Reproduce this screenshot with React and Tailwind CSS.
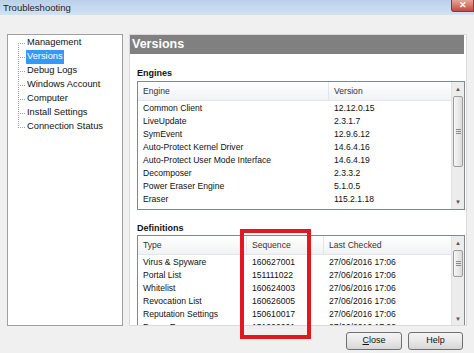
const engines = [
  ['Common Client', '12.12.0.15'],
  ['LiveUpdate', '2.3.1.7'],
  ['SymEvent', '12.9.6.12'],
  ['Auto-Protect Kernel Driver', '14.6.4.16'],
  ['Auto-Protect User Mode Interface', '14.6.4.19'],
  ['Decomposer', '2.3.3.2'],
  ['Power Eraser Engine', '5.1.0.5'],
  ['Eraser', '115.2.1.18'],
]

const definitions = [
  ['Virus & Spyware', '160627001', '27/06/2016 17:06'],
  ['Portal List', '151111022', '27/06/2016 17:06'],
  ['Whitelist', '160624003', '27/06/2016 17:06'],
  ['Revocation List', '160626005', '27/06/2016 17:06'],
  ['Reputation Settings', '150610017', '27/06/2016 17:06'],
  ['Power Eraser', '151020001', '27/06/2016 17:06'],
]

const treeItems = ['Management', 'Versions', 'Debug Logs', 'Windows Account', 'Computer', 'Install Settings', 'Connection Status']

function TreeLines() {
  return (
    <svg width="18" height="98" className="shrink-0">
      <line x1="10.5" y1="7" x2="10.5" y2="91" stroke="#a0a0a0" strokeDasharray="1 1" />
      {treeItems.map((_, i) => (
        <line key={i} x1="10" y1={7.5 + i * 14} x2="18" y2={7.5 + i * 14} stroke="#a0a0a0" strokeDasharray="1 1" />
      ))}
    </svg>
  )
}

function Scrollbar({ thumbTop, thumbHeight }) {
  return (
    <div className="w-[13px] h-full bg-[#ececec] border-l border-[#e2e2e2] flex flex-col">
      <div className="h-[14px] flex items-center justify-center text-[6px] text-[#555] leading-none">▲</div>
      <div style={{ marginTop: thumbTop, height: thumbHeight }} className="mx-[1px] rounded-[2px] border border-[#9c9c9c] bg-gradient-to-r from-[#f6f6f6] to-[#dcdcdc] flex items-center justify-center">
        <div className="w-[5px] flex flex-col gap-[1px]">
          <div className="h-px bg-[#8a8a8a]" />
          <div className="h-px bg-[#8a8a8a]" />
          <div className="h-px bg-[#8a8a8a]" />
        </div>
      </div>
      <div className="flex-1" />
      <div className="h-[14px] flex items-center justify-center text-[6px] text-[#555] leading-none">▼</div>
    </div>
  )
}

function ListBox({ height, cols, headers, rows, thumbTop, thumbHeight }) {
  return (
    <div style={{ height }} className="w-[328px] border border-[#828790] flex overflow-hidden bg-white">
      <div className="flex-1 flex flex-col">
        <div className="h-[19px] shrink-0 bg-gradient-to-b from-white to-[#f1f2f4] border-b border-[#e3e5e8] grid items-center text-[#333]" style={{ gridTemplateColumns: cols }}>
          {headers.map((h, i) => (
            <div key={h} className={`pl-[5px] h-full flex items-center ${i < headers.length - 1 ? 'border-r border-[#e3e5e8]' : ''}`}>{h}</div>
          ))}
        </div>
        <div className="pt-[1px]">
          {rows.map((r) => (
            <div key={r[0]} className="h-[13px] grid items-center text-[#111]" style={{ gridTemplateColumns: cols }}>
              {r.map((c, i) => (
                <div key={i} className="pl-[5px] whitespace-nowrap">{c}</div>
              ))}
            </div>
          ))}
        </div>
      </div>
      <Scrollbar thumbTop={thumbTop} thumbHeight={thumbHeight} />
    </div>
  )
}

function Button({ children }) {
  return (
    <div className="h-[18px] rounded-[3px] border border-[#707070] bg-gradient-to-b from-[#f3f3f3] via-[#e8e8e8] to-[#d6d6d6] flex items-center justify-center text-[9px] text-[#111]">
      {children}
    </div>
  )
}

export default function App() {
  return (
    <div className="relative w-[474px] h-[353px] bg-[#f0f0f0] overflow-hidden font-['Liberation_Sans',Arial,sans-serif]">
      {/* Title bar */}
      <div className="h-[15px] bg-gradient-to-b from-[#b9d0ea] to-[#d3e2f2] flex items-start justify-between">
        <span className="pl-[3px] pt-[1px] text-[9.5px] leading-[13px] text-[#1e1e1e]">Troubleshooting</span>
        <div className="w-[23px] h-[12px] rounded-bl-[3px] border border-t-0 border-[#8a3a30] bg-gradient-to-b from-[#e6a597] to-[#c3473b] flex items-center justify-center text-white text-[9px] font-bold leading-none">✕</div>
      </div>

      {/* Body */}
      <div className="pt-[19px] pl-[7px] flex gap-[6px]">
        {/* Tree */}
        <div className="w-[116px] h-[292px] bg-white border border-[#a0a0a0] pt-[1px]">
          <div className="flex">
            <TreeLines />
            <div className="flex flex-col text-[9.3px] text-[#111]">
              {treeItems.map((t) => (
                <div key={t} className="h-[14px] flex items-center">
                  <span className={`px-[1px] h-[14px] flex items-center whitespace-nowrap ${t === 'Versions' ? 'bg-[#3399ff] text-white' : ''}`}>{t}</span>
                </div>
              ))}
            </div>
          </div>
        </div>

        {/* Right panel */}
        <div className="w-[338px] h-[292px] bg-white border border-[#dadada] flex flex-col overflow-hidden">
          <div className="ml-0 mr-[2px] h-[19px] shrink-0 bg-[#808080] flex items-center pl-[2px]">
            <span className="text-white text-[12.5px] font-bold leading-none">Versions</span>
          </div>
          <div className="pl-[7px] text-[8.6px]">
            <div className="mt-[13px] h-[12px] leading-[12px] font-bold text-[9px] text-[#111]">Engines</div>
            <div className="mt-[2px]">
              <ListBox height={129} cols="191px 1fr" headers={['Engine', 'Version']} rows={engines} thumbTop={0} thumbHeight={71} />
            </div>
            <div className="mt-[12px] h-[12px] leading-[12px] font-bold text-[9px] text-[#111]">Definitions</div>
            <div className="mt-[1px]">
              <ListBox height={92} cols="109px 77px 1fr" headers={['Type', 'Sequence', 'Last Checked']} rows={definitions} thumbTop={0} thumbHeight={27} />
            </div>
          </div>
        </div>
      </div>

      {/* Buttons */}
      <div className="mt-[6px] pr-[11px] flex justify-end gap-[6px]">
        <div className="w-[56px]"><Button><span><span className="underline">C</span>lose</span></Button></div>
        <div className="w-[55px]"><Button>Help</Button></div>
      </div>

      {/* Annotation */}
      <div className="absolute left-[240px] top-[229px] w-[71px] h-[110px] border-[4px] border-[#e2171f]" />
    </div>
  )
}
